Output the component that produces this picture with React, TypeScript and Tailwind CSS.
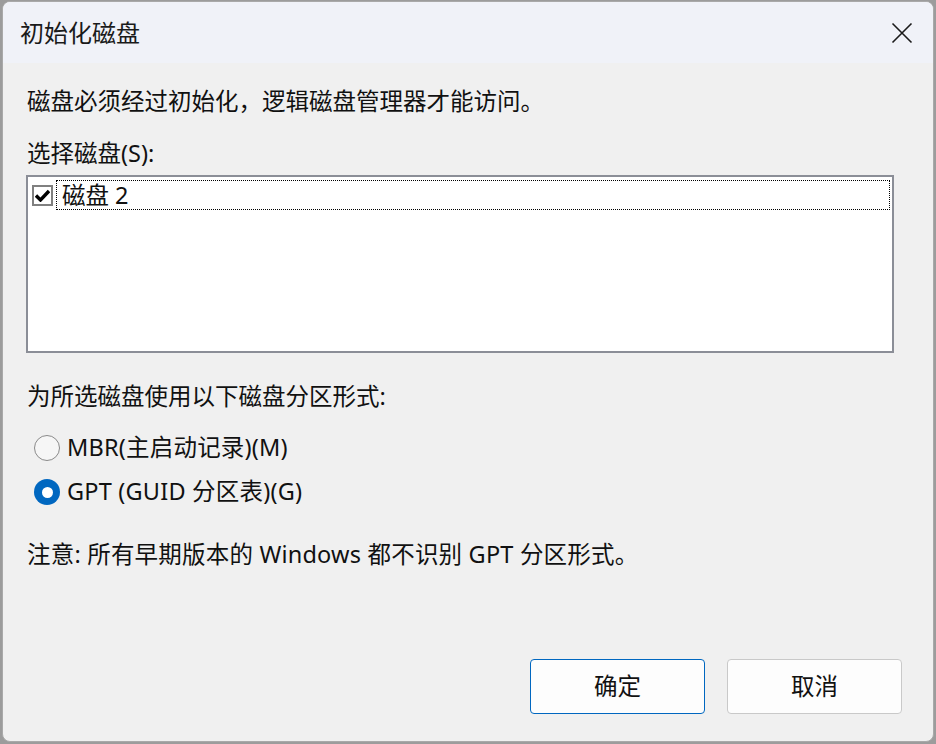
import React from 'react'

const font = "font-['Noto_Sans','Noto_Sans_CJK_SC',sans-serif]"

function CloseIcon() {
  return (
    <svg width="22" height="22" viewBox="0 0 22 22" fill="none">
      <path d="M1.5 1.5L20.5 20.5M20.5 1.5L1.5 20.5" stroke="#1a1a1a" strokeWidth="1.6" />
    </svg>
  )
}

function CheckBox() {
  return (
    <div className="w-[21px] h-[21px] border-2 border-[#808080] bg-white flex items-center justify-center">
      <svg width="15" height="13" viewBox="0 0 15 13">
        <path d="M1 6.5L5.5 11L14 2" stroke="#000" strokeWidth="3.4" fill="none" strokeLinejoin="miter" />
      </svg>
    </div>
  )
}

function Radio({ checked, label }: { checked?: boolean; label: string }) {
  return (
    <div className="flex items-center h-[32px] pl-[7px] gap-[7px]">
      {checked ? (
        <div className="w-[26px] h-[26px] rounded-full bg-[#0067c0] flex items-center justify-center">
          <div className="w-[11px] h-[11px] rounded-full bg-white" />
        </div>
      ) : (
        <div className="w-[26px] h-[26px] rounded-full border-[1.5px] border-[#8a8a8a] bg-[#f6f6f6]" />
      )}
      <span className="tracking-[0.2px]">{label}</span>
    </div>
  )
}

function Button({ label, primary }: { label: string; primary?: boolean }) {
  return (
    <button
      className={
        primary
          ? 'w-[175px] h-[55px] rounded-[4px] border-[1.5px] border-[#0067c0] bg-[#fdfdfd] flex items-center justify-center'
          : 'w-[175px] h-[55px] rounded-[4px] border border-[#c9c9c9] bg-[#fdfdfd] flex items-center justify-center'
      }
    >
      {label}
    </button>
  )
}

export default function App() {
  return (
    <div className={`w-[936px] h-[744px] bg-[#9c9c9c] pt-[1px] pl-[2px] pr-[2px] pb-[2px] ${font} text-[23.5px] text-[#111]`}>
      <div className="w-full h-full rounded-[8px] border border-[#a9a9a9] overflow-hidden flex flex-col bg-[#f0f0f0]">
        {/* title bar */}
        <div className="h-[61px] bg-[#f0f2f8] flex items-center justify-between pl-[17px] pr-[20px] shrink-0">
          <span className="leading-[32px] text-[#1a1a1a] text-[24px]">初始化磁盘</span>
          <CloseIcon />
        </div>

        {/* body */}
        <div className="flex-1 flex flex-col pl-[24px] pr-[31px] pt-[22px] pb-[27px]">
          <div className="leading-[32px]">磁盘必须经过初始化，逻辑磁盘管理器才能访问。</div>
          <div className="leading-[32px] mt-[20px]">选择磁盘(S):</div>
          <div className="mt-[6px] -ml-[1px] w-[868px] h-[178px] border-2 border-[#8b8e97] bg-white pt-[3px] pl-[4px] pr-[2px]">
            <div className="flex items-center h-[30px] gap-[3px]">
              <CheckBox />
              <div className="flex-1 h-[30px] border border-dotted border-black flex items-center pl-[5px] leading-[28px]">
                磁盘 2
              </div>
            </div>
          </div>
          <div className="leading-[32px] mt-[27px]">为所选磁盘使用以下磁盘分区形式:</div>
          <div className="mt-[20px]">
            <Radio label="MBR(主启动记录)(M)" />
          </div>
          <div className="mt-[12px]">
            <Radio checked label="GPT (GUID 分区表)(G)" />
          </div>
          <div className="leading-[32px] mt-[30px] tracking-[0.2px]">注意: 所有早期版本的 Windows 都不识别 GPT 分区形式。</div>
          <div className="mt-auto flex justify-end gap-[22px]">
            <Button primary label="确定" />
            <Button label="取消" />
          </div>
        </div>
      </div>
    </div>
  )
}
